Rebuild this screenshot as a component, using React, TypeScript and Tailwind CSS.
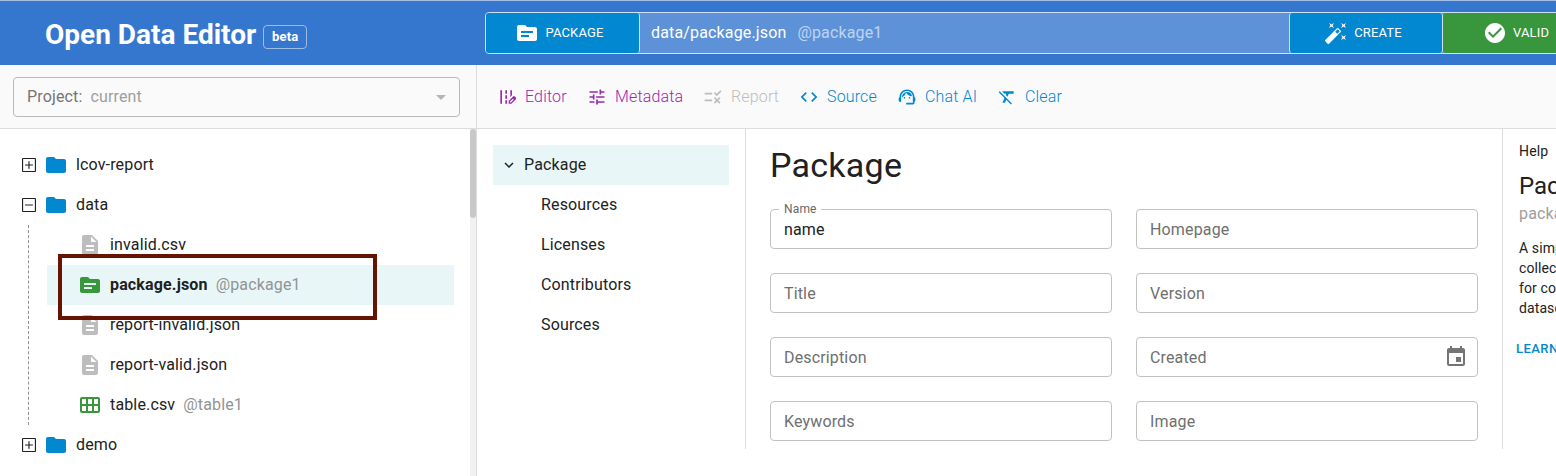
import type { ReactNode } from "react";
import {
  MdArrowDropDown,
  MdAutoFixHigh,
  MdCalendarViewMonth,
  MdCheckCircle,
  MdCode,
  MdDescription,
  MdEditRoad,
  MdEvent,
  MdExpandMore,
  MdFolder,
  MdFormatClear,
  MdRule,
  MdSource,
  MdSupportAgent,
  MdTune,
} from "react-icons/md";

const SQUARE =
  "M22.047 22.074v0 0-20.147 0h-20.12v0 20.147 0h20.12zM22.047 24h-20.12q-.803 0-1.365-.562t-.562-1.365v-20.147q0-.776.562-1.351t1.365-.575h20.147q.776 0 1.351.575t.575 1.351v20.147q0 .803-.575 1.365t-1.378.562v0z";
const MINUS =
  "M17.873 11.023h-11.826q-.375 0-.669.281t-.294.682v0q0 .401.294.682t.669.281h11.826q.375 0 .669-.281t.294-.682v0q0-.401-.294-.682t-.669-.281z";
const PLUS =
  "M17.873 12.977h-4.923v4.896q0 .401-.281.682t-.682.281v0q-.375 0-.669-.281t-.294-.682v-4.896h-4.923q-.401 0-.682-.294t-.281-.669v0q0-.401.281-.682t.682-.281h4.923v-4.896q0-.401.294-.682t.669-.281v0q.401 0 .682.281t.281.682v4.896h4.923q.401 0 .682.281t.281.682v0q0 .375-.281.669t-.682.294z";

function FolderRow({ name, open = false }: { name: string; open?: boolean }) {
  return (
    <div className="flex h-10 items-center pl-[22px]">
      <svg viewBox="0 0 24 24" className="size-[14px]" fill="currentColor">
        <path d={SQUARE + (open ? MINUS : PLUS)} />
      </svg>
      <MdFolder className="ml-2 size-6 text-[#0288d1]" />
      <span className="ml-2">{name}</span>
    </div>
  );
}

function FileRow({
  icon,
  name,
  tag,
  selected = false,
}: {
  icon: ReactNode;
  name: string;
  tag?: string;
  selected?: boolean;
}) {
  return (
    <div className={selected ? "flex h-10 items-center bg-[#e8f6f7] pl-[31px]" : "flex h-10 items-center pl-[31px]"}>
      {icon}
      <span className={selected ? "ml-2 font-bold tracking-[0.15px]" : "ml-2"}>{name}</span>
      {tag && <span className="ml-2 text-[#8f9495]">{tag}</span>}
    </div>
  );
}

function Tool({ icon, label, className }: { icon: ReactNode; label: string; className: string }) {
  return (
    <div className={"flex items-center gap-2 font-light " + className}>
      {icon}
      <span>{label}</span>
    </div>
  );
}

function Field({ label, value, icon }: { label: string; value?: string; icon?: ReactNode }) {
  return (
    <div className="relative flex h-10 items-center justify-between rounded border border-[#c2c2c2] px-[13px]">
      {value && (
        <span className="absolute -top-[7px] left-[8px] bg-white pr-1 pl-[5px] text-xs leading-[12px] text-[#666]">
          {label}
        </span>
      )}
      {value ? <span className="pt-0.5">{value}</span> : <span className="pt-0.5 text-[#6f6f6f]">{label}</span>}
      {icon}
    </div>
  );
}

const doc = <MdDescription className="size-6 text-[#bdbdbd]" />;

export default function App() {
  return (
    <div className="relative flex h-[476px] w-[1556px] flex-col overflow-hidden bg-white font-['Roboto',sans-serif] text-base tracking-[0.15px] text-[#212121]">
      <header className="flex h-[65px] shrink-0 border-t border-[#a4c0e4] bg-[#3577cf] text-white">
        <div className="flex w-[485px] shrink-0 items-center pt-1 pl-[45px]">
          <h1 className="text-[28px] leading-8 font-bold tracking-[0px]">Open Data Editor</h1>
          <span className="mt-1 ml-[7px] flex h-6 w-11 items-center justify-center rounded border border-[#9dbbe6] text-[13px] font-bold tracking-[0.2px]">
            beta
          </span>
        </div>
        <div className="mt-[11px] flex h-[42px] w-[1112px] shrink-0 rounded border border-[#cde2f5] bg-[#5d92d8]">
          <div className="flex w-[154px] items-center justify-center gap-[6px] rounded-[3px] border-r border-[#cde2f5] bg-[#0288d1] pr-[6px] text-[13px] tracking-[0.15px]">
            <MdSource className="size-6" />
            PACKAGE
          </div>
          <div className="flex w-[649px] items-center pl-[11px]">
            <span>data/package.json</span>
            <span className="ml-[11px] text-[#bdd4f1]">@package1</span>
          </div>
          <div className="flex w-[154px] items-center justify-center gap-[6px] rounded-[3px] border-x border-[#cde2f5] bg-[#0288d1] pr-[6px] text-[13px] tracking-[0.15px]">
            <MdAutoFixHigh className="size-6" />
            CREATE
          </div>
          <div className="flex w-[153px] items-center gap-[6px] rounded-[3px] bg-[#38963c] pl-10 text-[13px] tracking-[0.15px]">
            <MdCheckCircle className="size-6" />
            VALID
          </div>
        </div>
      </header>

      <div className="flex min-h-0 flex-1">
        <aside className="flex w-[477px] shrink-0 flex-col border-r border-[#ddd]">
          <div className="h-16 shrink-0 border-b border-[#ddd] bg-[#fafafa] pt-3 pl-[13px]">
            <div className="flex h-10 w-[447px] items-center rounded border border-[#b9b9b9] pr-[6px] pl-[13px]">
              <span className="text-[#757575]">Project:</span>
              <span className="ml-2 flex-1 text-[#9e9e9e]">current</span>
              <MdArrowDropDown className="size-6 text-[#b5b5b5]" />
            </div>
          </div>
          <div className="flex min-h-0 flex-1">
            <div className="w-[470px] shrink-0 overflow-hidden pt-4">
              <FolderRow name="lcov-report" />
              <FolderRow name="data" open />
              <div className="mr-4 ml-[28px] border-l border-dashed border-[#919191] pl-[18px]">
                <FileRow icon={doc} name="invalid.csv" />
                <FileRow
                  icon={<MdSource className="size-6 text-[#38963c]" />}
                  name="package.json"
                  tag="@package1"
                  selected
                />
                <FileRow icon={doc} name="report-invalid.json" />
                <FileRow icon={doc} name="report-valid.json" />
                <FileRow
                  icon={<MdCalendarViewMonth className="size-6 text-[#38963c]" />}
                  name="table.csv"
                  tag="@table1"
                />
              </div>
              <FolderRow name="demo" />
            </div>
            <div className="w-[6px] bg-[#f1f1f1]">
              <div className="h-[89px] rounded-[3px] bg-[#c8c8c8]" />
            </div>
          </div>
        </aside>

        <main className="flex w-[1079px] shrink-0 flex-col overflow-hidden">
          <div className="flex h-16 shrink-0 items-center border-b border-[#ddd] bg-[#fafafa] pl-5">
            <Tool icon={<MdEditRoad className="size-5" />} label="Editor" className="w-[90px] text-[#9c27b0]" />
            <Tool icon={<MdTune className="size-5" />} label="Metadata" className="w-[116px] text-[#9c27b0]" />
            <Tool icon={<MdRule className="size-5" />} label="Report" className="w-[96px] text-[#bdbdbd]" />
            <Tool icon={<MdCode className="size-5" />} label="Source" className="w-[98px] text-[#0288d1]" />
            <Tool icon={<MdSupportAgent className="size-5" />} label="Chat AI" className="w-[100px] text-[#0288d1]" />
            <Tool icon={<MdFormatClear className="size-5" />} label="Clear" className="text-[#0288d1]" />
          </div>

          <div className="flex h-[320px]">
            <nav className="w-[269px] shrink-0 border-r border-[#ddd] px-4 pt-4">
              <div className="flex h-10 items-center bg-[#e8f6f7] pl-[7px]">
                <MdExpandMore className="size-[18px]" />
                <span className="ml-[6px]">Package</span>
              </div>
              {["Resources", "Licenses", "Contributors", "Sources"].map((item) => (
                <div key={item} className="flex h-10 items-center pl-12">
                  {item}
                </div>
              ))}
            </nav>
            <section className="w-[757px] shrink-0 border-r border-[#ddd] px-6 pt-[15px]">
              <h2 className="mb-[23px] text-[34px] leading-[42px] tracking-[0.25px]">Package</h2>
              <div className="grid grid-cols-2 gap-6">
                <Field label="Name" value="name" />
                <Field label="Homepage" />
                <Field label="Title" />
                <Field label="Version" />
                <Field label="Description" />
                <Field label="Created" icon={<MdEvent className="-mr-1 size-6 text-[#757575]" />} />
                <Field label="Keywords" />
                <Field label="Image" />
              </div>
            </section>
            <aside className="shrink-0 pt-3 pl-4 text-sm whitespace-nowrap">
              <div className="leading-5">Help</div>
              <h3 className="mt-[9px] text-2xl leading-8 tracking-[0px]">Package</h3>
              <div className="text-base leading-6 text-[#9e9e9e]">package</div>
              <p className="mt-3 leading-5 tracking-[0.1px]">
                A simple format
                <br />
                collection of data
                <br />
                for contained
                <br />
                datasets
              </p>
              <div className="mt-[21px] -ml-[3px] text-[13px] leading-5 font-medium tracking-[0.45px] text-[#0288d1]">
                LEARN MORE
              </div>
            </aside>
          </div>
        </main>
      </div>

      <div className="absolute top-[254px] left-[58px] h-[66px] w-[319px] border-4 border-[#641400]" />
    </div>
  );
}
